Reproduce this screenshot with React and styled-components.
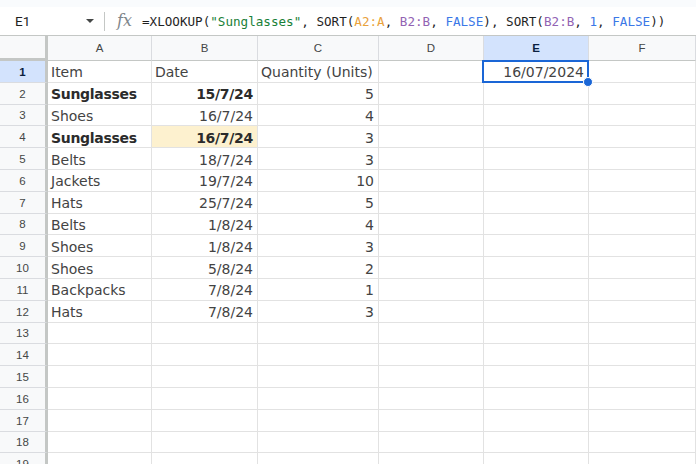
import React from "react";
import styled, { createGlobalStyle } from "styled-components";

const GlobalStyle = createGlobalStyle`
  html, body {
    margin: 0;
    padding: 0;
    background: #ffffff;
    overflow: hidden;
  }
  * {
    box-sizing: border-box;
  }
`;

const Page = styled.div`
  width: 696px;
  height: 464px;
  overflow: hidden;
  background: #ffffff;
  display: flex;
  flex-direction: column;
`;

const TopStrip = styled.div`
  height: 7px;
  background: #f9fbfd;
  flex-shrink: 0;
`;

const FormulaBar = styled.div`
  height: 29px;
  flex-shrink: 0;
  display: flex;
  align-items: center;
  border-bottom: 1px solid #c4c7c5;
  background: #ffffff;
`;

const NameBox = styled.div`
  width: 104px;
  display: flex;
  align-items: center;
  justify-content: space-between;
  padding: 0 10px 0 15px;
  font-family: Roboto, "Liberation Sans", sans-serif;
  font-size: 13.5px;
  color: #1f1f1f;
`;

const Caret = styled.span`
  width: 0;
  height: 0;
  border-left: 4px solid transparent;
  border-right: 4px solid transparent;
  border-top: 4px solid #444746;
`;

const Divider = styled.div`
  width: 1px;
  height: 19px;
  background: #c4c7c5;
  margin-right: 12px;
`;

const Fx = styled.span`
  font-family: "DejaVu Serif", "Liberation Serif", serif;
  font-style: italic;
  font-size: 16px;
  color: #80868b;
  width: 25px;
  margin-top: -2px;
`;

const Formula = styled.div`
  font-family: "DejaVu Sans Mono", "Liberation Mono", monospace;
  font-size: 12.6px;
  color: #1f1f1f;
  white-space: pre;
`;

const Tok = styled.span`
  color: ${(p) => p.$c};
`;

const Grid = styled.div`
  flex: 1;
  overflow: hidden;
  display: grid;
  grid-template-columns: 48px 104px 106px 121px 105px 105px 107px;
  grid-template-rows: 25px repeat(19, 21.8px);
`;

const Corner = styled.div`
  background: #f8f9fa;
  border-right: 3px solid #c4c7c5;
  border-bottom: 3px solid #c4c7c5;
`;

const ColHead = styled.div`
  display: flex;
  align-items: center;
  justify-content: center;
  background: ${(p) => (p.$active ? "#d3e3fd" : "#f8f9fa")};
  border-right: 1px solid #dadce0;
  border-bottom: 1px solid #c4c7c5;
  font-family: "Liberation Sans", Arial, sans-serif;
  font-size: 11.5px;
  color: ${(p) => (p.$active ? "#0b1f40" : "#444746")};
  font-weight: ${(p) => (p.$active ? 600 : 400)};
`;

const RowHead = styled.div`
  display: flex;
  align-items: center;
  justify-content: center;
  padding-top: 1px;
  background: ${(p) => (p.$active ? "#d3e3fd" : "#f8f9fa")};
  border-right: 3px solid #c4c7c5;
  border-bottom: 1px solid #dadce0;
  font-family: "Liberation Sans", Arial, sans-serif;
  font-size: 11.5px;
  color: ${(p) => (p.$active ? "#0b1f40" : "#444746")};
  font-weight: ${(p) => (p.$active ? 700 : 400)};
`;

const Cell = styled.div`
  position: relative;
  display: flex;
  align-items: center;
  justify-content: ${(p) => (p.$right ? "flex-end" : "flex-start")};
  padding: 2px 4px 0 3px;
  background: ${(p) => p.$fill || "#ffffff"};
  border-right: 1px solid #e2e2e2;
  border-bottom: 1px solid #e2e2e2;
  font-family: "DejaVu Sans", Verdana, sans-serif;
  font-size: 14px;
  font-weight: ${(p) => (p.$bold ? 700 : 400)};
  letter-spacing: ${(p) => (p.$bold ? "-0.3px" : "0")};
  color: ${(p) => (p.$bold ? "#2b2b2b" : "#434343")};
  white-space: nowrap;
  overflow: visible;
`;

const Selection = styled.div`
  position: absolute;
  z-index: 2;
  top: -1px;
  left: -2px;
  right: -1px;
  bottom: -1px;
  border: 2px solid #1a66d6;
  pointer-events: none;
`;

const Handle = styled.div`
  position: absolute;
  right: -6px;
  bottom: -6px;
  width: 10px;
  height: 10px;
  border-radius: 50%;
  background: #1a66d6;
  border: 1px solid #ffffff;
`;

const columns = ["A", "B", "C", "D", "E", "F"];

const data = [
  [{ v: "Item" }, { v: "Date" }, { v: "Quantity (Units)" }, {}, { v: "16/07/2024", r: true, sel: true }],
  [{ v: "Sunglasses", b: true }, { v: "15/7/24", r: true, b: true }, { v: "5", r: true }],
  [{ v: "Shoes" }, { v: "16/7/24", r: true }, { v: "4", r: true }],
  [{ v: "Sunglasses", b: true }, { v: "16/7/24", r: true, b: true, fill: "#fdf1cf" }, { v: "3", r: true }],
  [{ v: "Belts" }, { v: "18/7/24", r: true }, { v: "3", r: true }],
  [{ v: "Jackets" }, { v: "19/7/24", r: true }, { v: "10", r: true }],
  [{ v: "Hats" }, { v: "25/7/24", r: true }, { v: "5", r: true }],
  [{ v: "Belts" }, { v: "1/8/24", r: true }, { v: "4", r: true }],
  [{ v: "Shoes" }, { v: "1/8/24", r: true }, { v: "3", r: true }],
  [{ v: "Shoes" }, { v: "5/8/24", r: true }, { v: "2", r: true }],
  [{ v: "Backpacks" }, { v: "7/8/24", r: true }, { v: "1", r: true }],
  [{ v: "Hats" }, { v: "7/8/24", r: true }, { v: "3", r: true }],
];

const TOTAL_ROWS = 19;

const App = () => {
  const rows = [];
  for (let i = 0; i < TOTAL_ROWS; i++) {
    const rowData = data[i] || [];
    rows.push(
      <RowHead key={`h${i}`} $active={i === 0}>
        {i + 1}
      </RowHead>
    );
    columns.forEach((col, j) => {
      const c = rowData[j] || {};
      rows.push(
        <Cell key={`${col}${i}`} $right={c.r} $bold={c.b} $fill={c.fill}>
          {c.v}
          {c.sel && (
            <Selection>
              <Handle />
            </Selection>
          )}
        </Cell>
      );
    });
  }

  return (
    <Page>
      <GlobalStyle />
      <TopStrip />
      <FormulaBar>
        <NameBox>
          <span>E1</span>
          <Caret />
        </NameBox>
        <Divider />
        <Fx>fx</Fx>
        <Formula>
          =XLOOKUP(<Tok $c="#188038">"Sunglasses"</Tok>, SORT(
          <Tok $c="#e9a23b">A2:A</Tok>, <Tok $c="#9263b3">B2:B</Tok>,{" "}
          <Tok $c="#3b78e7">FALSE</Tok>), SORT(<Tok $c="#9263b3">B2:B</Tok>,{" "}
          <Tok $c="#3b78e7">1</Tok>, <Tok $c="#3b78e7">FALSE</Tok>))
        </Formula>
      </FormulaBar>
      <Grid>
        <Corner />
        {columns.map((col) => (
          <ColHead key={col} $active={col === "E"}>
            {col}
          </ColHead>
        ))}
        {rows}
      </Grid>
    </Page>
  );
};

export default App;
